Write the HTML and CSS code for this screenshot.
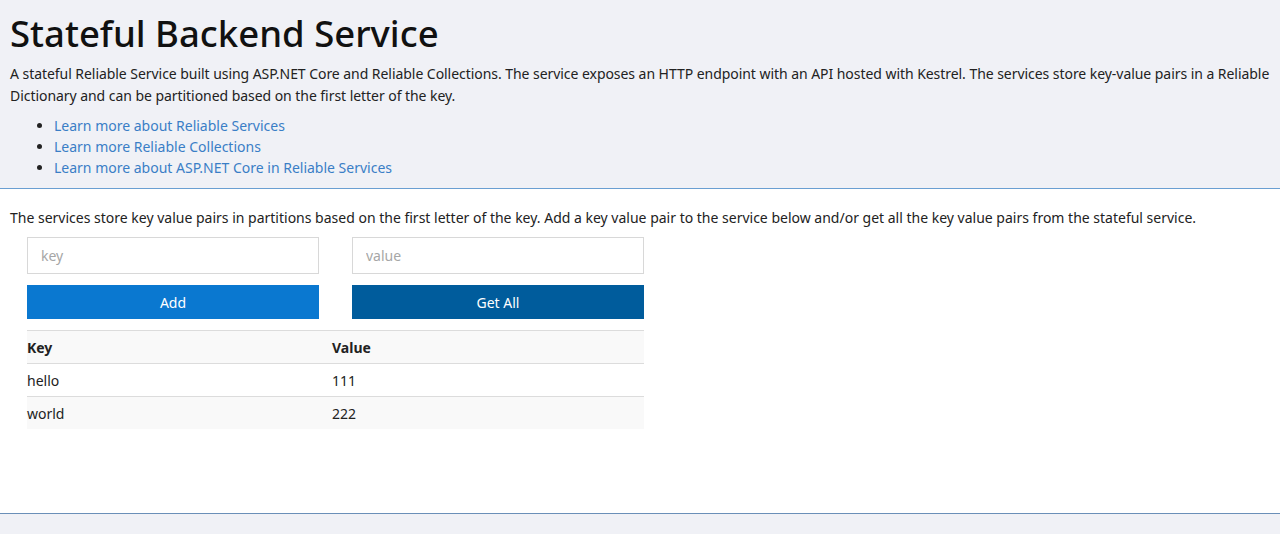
FILE: index.html
```html
<!DOCTYPE html>
<html>
<head>
<meta charset="utf-8">
<link rel="stylesheet" href="styles.css">
</head>
<body>
<header class="intro">
  <h1 class="title">Stateful Backend Service</h1>
  <p class="lead">A stateful Reliable Service built using ASP.NET Core and Reliable Collections. The service exposes an HTTP endpoint with an API hosted with Kestrel. The services store key-value pairs in a Reliable Dictionary and can be partitioned based on the first letter of the key.</p>
  <ul class="links">
    <li><a href="#">Learn more about Reliable Services</a></li>
    <li><a href="#">Learn more Reliable Collections</a></li>
    <li><a href="#">Learn more about ASP.NET Core in Reliable Services</a></li>
  </ul>
</header>
<main class="content">
  <p class="desc">The services store key value pairs in partitions based on the first letter of the key. Add a key value pair to the service below and/or get all the key value pairs from the stateful service.</p>
  <div class="form">
    <div class="col">
      <input class="field" type="text" placeholder="key">
      <button class="btn btn-add">Add</button>
    </div>
    <div class="col">
      <input class="field" type="text" placeholder="value">
      <button class="btn btn-get">Get All</button>
    </div>
  </div>
  <table class="kv">
    <thead>
      <tr><th>Key</th><th>Value</th></tr>
    </thead>
    <tbody>
      <tr><td>hello</td><td>111</td></tr>
      <tr class="alt"><td>world</td><td>222</td></tr>
    </tbody>
  </table>
</main>
<footer class="foot"></footer>
</body>
</html>
```
FILE: styles.css
```css
html, body {
  margin: 0;
  padding: 0;
}
body {
  font-family: "Noto Sans", "Open Sans", sans-serif;
  font-size: 14px;
  color: #222;
  background: #f0f1f6;
}
.intro {
  background: #f0f1f6;
  padding: 9px 0 10px 10px;
  border-bottom: 1px solid #6a9fd2;
  height: 169px;
}
.title {
  margin: 0;
  font-size: 36.5px;
  font-weight: 500;
  line-height: 48px;
  color: #111;
}
.lead {
  margin: 6px 0 8px 0;
  line-height: 22px;
  font-size: 14px;
  letter-spacing: -0.05px;
}
.links {
  margin: 0;
  padding-left: 44px;
  line-height: 21px;
}
.links a {
  color: #3a7ec6;
  text-decoration: none;
}
.content {
  background: #fff;
  padding: 19px 10px 0 10px;
  height: 305px;
  border-bottom: 1px solid #6a8fb8;
}
.desc {
  margin: 0 0 9px 0;
  line-height: 20px;
}
.form {
  display: flex;
  gap: 33px;
  padding-left: 17px;
}
.col {
  display: flex;
  flex-direction: column;
  gap: 11px;
  width: 292px;
}
.field {
  box-sizing: border-box;
  height: 37px;
  border: 1px solid #d8d8d8;
  padding: 0 13px;
  font-family: inherit;
  font-size: 14px;
  color: #333;
  outline: none;
}
.field::placeholder {
  color: #a6a6a6;
}
.btn {
  height: 34px;
  border: none;
  color: #fff;
  font-family: inherit;
  font-size: 14px;
}
.btn-add { background: #0a78d0; }
.btn-get { background: #005c9c; }
.kv {
  margin: 11px 0 0 17px;
  width: 617px;
  border-collapse: collapse;
}
.kv th, .kv td {
  text-align: left;
  padding: 0;
  height: 32px;
  border-top: 1px solid #dcdcdc;
  vertical-align: middle;
}
.kv th {
  font-weight: 700;
  background: #f9f9f9;
}
.kv th:first-child, .kv td:first-child {
  width: 305px;
}
.kv tr.alt td {
  background: #f9f9f9;
}
.foot {
  height: 20px;
}
```
